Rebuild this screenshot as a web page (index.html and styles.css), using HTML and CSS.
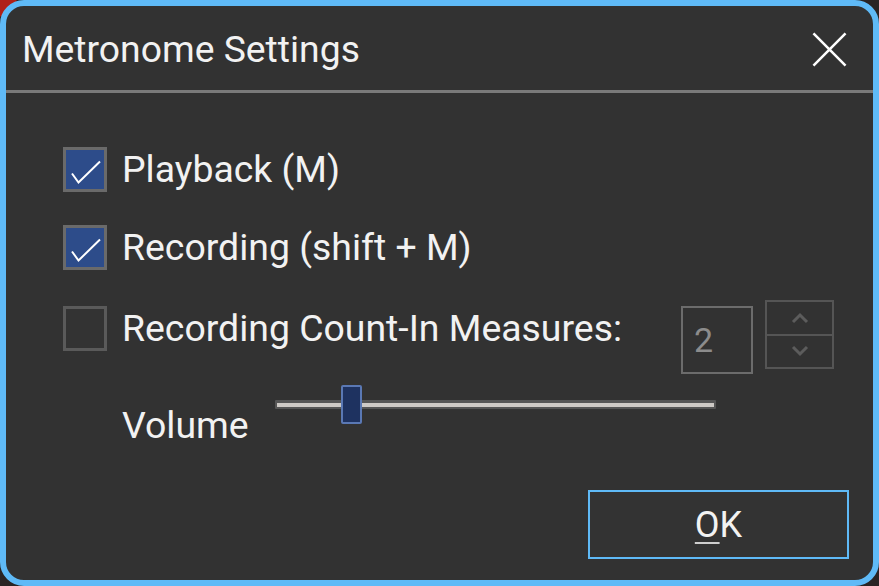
FILE: index.html
```html
<!DOCTYPE html>
<html>
<head>
<meta charset="utf-8">
<link rel="stylesheet" href="styles.css">
</head>
<body>
<div class="dialog">
  <div class="titlebar">
    <span class="title">Metronome Settings</span>
    <svg class="close" width="36" height="36" viewBox="0 0 36 36"><path d="M1.5 1.5L34.5 34.5M34.5 1.5L1.5 34.5" stroke="#fff" stroke-width="2.6" fill="none"/></svg>
  </div>
  <div class="content">
    <div class="row">
      <span class="check on"><svg width="38" height="39" viewBox="0 0 38 39"><path d="M6 23.5L12.5 32.5L34 11.5" stroke="#fff" stroke-width="2" fill="none"/></svg></span>
      <span class="label">Playback (M)</span>
    </div>
    <div class="row">
      <span class="check on"><svg width="38" height="39" viewBox="0 0 38 39"><path d="M6 23.5L12.5 32.5L34 11.5" stroke="#fff" stroke-width="2" fill="none"/></svg></span>
      <span class="label">Recording (shift + M)</span>
    </div>
    <div class="row row3">
      <span class="check"></span>
      <span class="label">Recording Count-In Measures:</span>
      <span class="spin-input">2</span>
      <span class="spin-btns">
        <span class="spin-btn"><svg width="20" height="12" viewBox="0 0 20 12"><path d="M3 10L10 3L17 10" stroke="#5c5c5c" stroke-width="3" fill="none"/></svg></span>
        <span class="spin-btn"><svg width="20" height="12" viewBox="0 0 20 12"><path d="M3 2L10 9L17 2" stroke="#5c5c5c" stroke-width="3" fill="none"/></svg></span>
      </span>
    </div>
    <div class="volume">
      <span class="label">Volume</span>
      <div class="slider">
        <div class="track"><div class="track-line"></div></div>
        <div class="thumb"></div>
      </div>
    </div>
  </div>
  <div class="footer">
    <button class="ok"><u>O</u>K</button>
  </div>
</div>
</body>
</html>
```
FILE: styles.css
```css
html, body { margin: 0; padding: 0; }
body {
  width: 879px;
  height: 586px;
  background: radial-gradient(circle at 0 0, #b02018 0, #b02018 16px, #2a2424 17px);
  font-family: Roboto, "Noto Sans", sans-serif;
  color: #f2f2f2;
  overflow: hidden;
}
.dialog {
  box-sizing: border-box;
  width: 879px;
  height: 586px;
  border: 6px solid #5fbaf7;
  border-radius: 24px;
  background: #323232;
  display: flex;
  flex-direction: column;
}
.titlebar {
  box-sizing: border-box;
  height: 87px;
  border-bottom: 3px solid #7a7a7a;
  display: flex;
  align-items: flex-start;
  justify-content: space-between;
  padding: 21px 26px 0 16px;
  flex: none;
}
.title { font-size: 37.3px; line-height: 45px; }
.close { display: block; width: 35px; height: 35px; margin-top: 5px; }
.content {
  padding: 54px 0 0 57px;
  display: flex;
  flex-direction: column;
}
.row {
  display: flex;
  align-items: flex-start;
  height: 45px;
  margin-bottom: 33px;
}
.check {
  box-sizing: border-box;
  width: 44px;
  height: 45px;
  border: 3px solid #6a6a6a;
  background: #2d4c8a;
  display: flex;
  align-items: center;
  justify-content: center;
  margin-right: 15px;
  flex: none;
}
.check svg { display: block; }
.check:not(.on) { background: #333333; border-color: #5a5a5a; }
.label { font-size: 37.4px; line-height: 45px; color: #f2f2f2; white-space: nowrap; }
.row3 { margin-top: 3px; margin-bottom: 0; height: 68px; }
.spin-input {
  box-sizing: border-box;
  width: 72px;
  height: 68px;
  border: 2px solid #6c6c6c;
  color: #8c8c8c;
  font-size: 34px;
  display: flex;
  align-items: center;
  padding-left: 11px;
  margin-left: auto;
  flex: none;
}
.spin-btns {
  box-sizing: border-box;
  width: 69px;
  height: 69px;
  margin-left: 12px;
  margin-right: 39px;
  margin-top: -6px;
  border: 2px solid #555;
  display: flex;
  flex-direction: column;
  flex: none;
}
.spin-btn {
  flex: 1;
  display: flex;
  align-items: center;
  justify-content: center;
}
.spin-btn + .spin-btn { border-top: 2px solid #555; }
.volume {
  display: flex;
  align-items: flex-start;
  padding-left: 59px;
}
.volume .label { margin-top: 29px; }
.slider {
  position: relative;
  width: 441px;
  height: 39px;
  margin-left: 26px;
  margin-top: 11px;
}
.track {
  position: absolute;
  left: 0; right: 0; top: 15px;
  height: 9px;
  background: #555;
  border-radius: 1px;
  display: flex;
  align-items: center;
  padding: 0 2px;
}
.track-line { height: 4px; background: #cdc9c5; flex: 1; }
.thumb {
  position: absolute;
  left: 66px;
  top: 0;
  box-sizing: border-box;
  width: 21px;
  height: 39px;
  background: #1e3260;
  border: 2px solid #5a78b4;
  border-radius: 2px;
}
.footer {
  margin-top: auto;
  display: flex;
  justify-content: flex-end;
  padding: 0 24px 21px 0;
}
.ok {
  box-sizing: border-box;
  width: 261px;
  height: 69px;
  border: 2px solid #5fbaf7;
  background: #333;
  color: #f2f2f2;
  font-family: Roboto, "Noto Sans", sans-serif;
  font-size: 36px;
  padding: 0;
  border-radius: 0;
}
.ok u { text-decoration-thickness: 2px; text-underline-offset: 5px; text-decoration-color: #cfcfcf; }
```
